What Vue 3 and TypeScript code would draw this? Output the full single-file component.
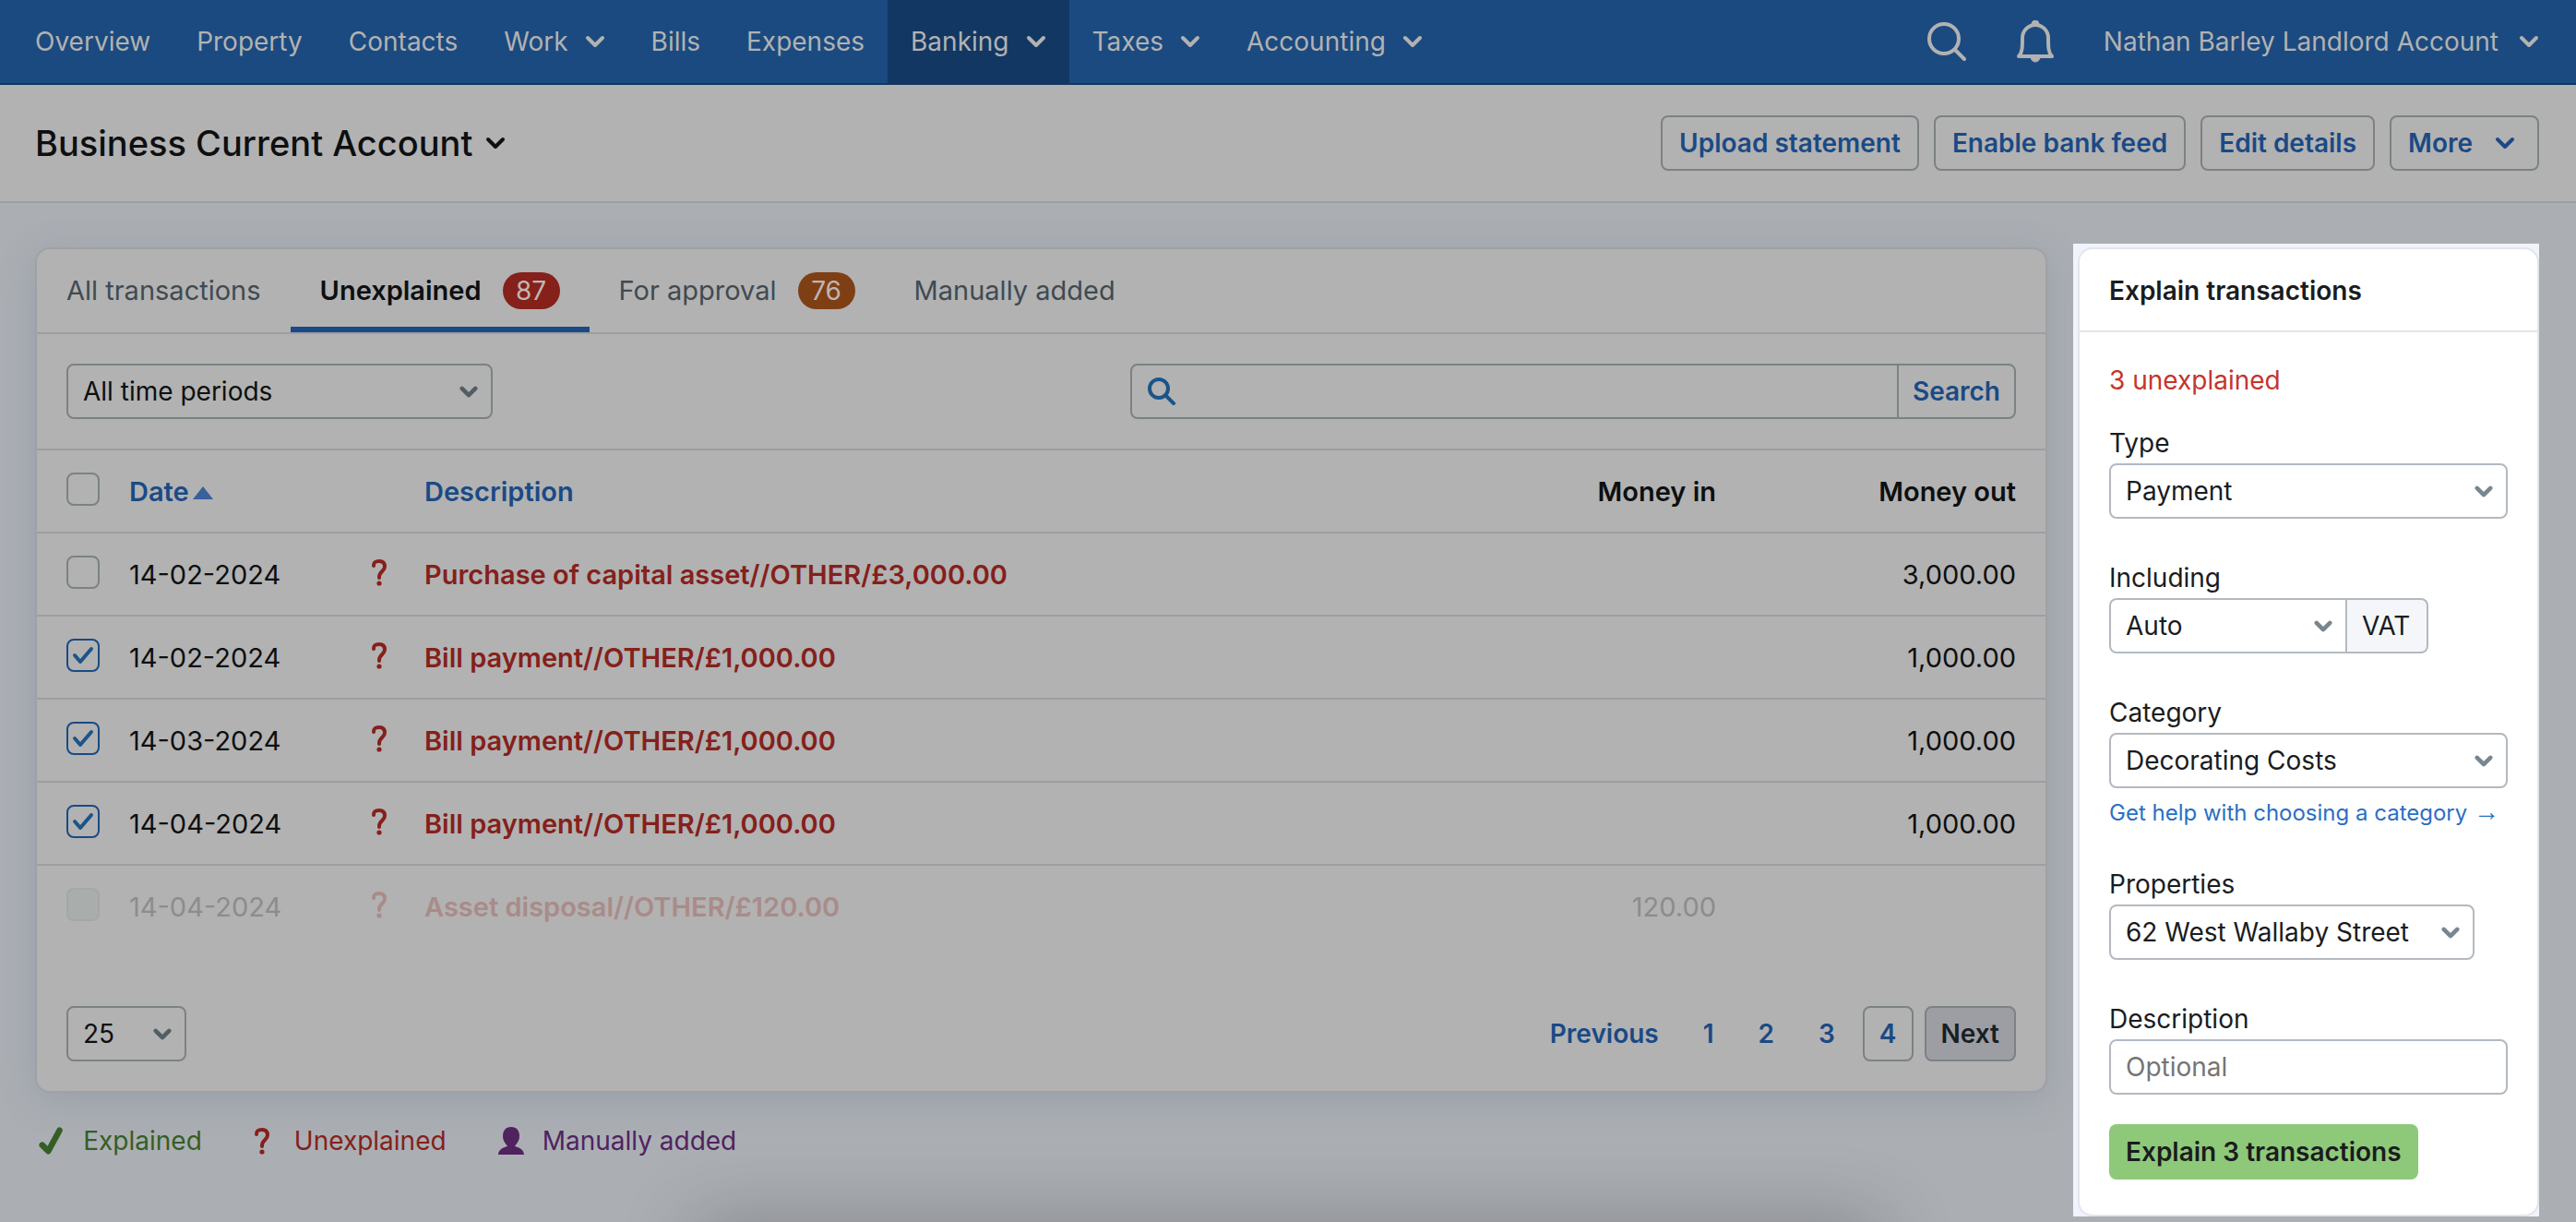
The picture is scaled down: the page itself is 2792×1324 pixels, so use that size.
<script setup lang="ts">
import { ref } from 'vue'

interface NavItem {
  label: string
  menu?: boolean
  active?: boolean
}

interface Tab {
  label: string
  count?: number
  tone?: 'red' | 'orange'
  active?: boolean
}

interface Transaction {
  id: number
  date: string
  description: string
  moneyIn: string
  moneyOut: string
  checked: boolean
  disabled?: boolean
}

const navItems: NavItem[] = [
  { label: 'Overview' },
  { label: 'Property' },
  { label: 'Contacts' },
  { label: 'Work', menu: true },
  { label: 'Bills' },
  { label: 'Expenses' },
  { label: 'Banking', menu: true, active: true },
  { label: 'Taxes', menu: true },
  { label: 'Accounting', menu: true },
]

const tabs: Tab[] = [
  { label: 'All transactions' },
  { label: 'Unexplained', count: 87, tone: 'red', active: true },
  { label: 'For approval', count: 76, tone: 'orange' },
  { label: 'Manually added' },
]

const transactions = ref<Transaction[]>([
  { id: 1, date: '14-02-2024', description: 'Purchase of capital asset//OTHER/£3,000.00', moneyIn: '', moneyOut: '3,000.00', checked: false },
  { id: 2, date: '14-02-2024', description: 'Bill payment//OTHER/£1,000.00', moneyIn: '', moneyOut: '1,000.00', checked: true },
  { id: 3, date: '14-03-2024', description: 'Bill payment//OTHER/£1,000.00', moneyIn: '', moneyOut: '1,000.00', checked: true },
  { id: 4, date: '14-04-2024', description: 'Bill payment//OTHER/£1,000.00', moneyIn: '', moneyOut: '1,000.00', checked: true },
  { id: 5, date: '14-04-2024', description: 'Asset disposal//OTHER/£120.00', moneyIn: '120.00', moneyOut: '', checked: false, disabled: true },
])

const pages = [1, 2, 3, 4]
const currentPage = 4
</script>

<template>
  <div class="page">
    <header class="topbar">
      <nav class="nav" aria-label="Main">
        <a v-for="item in navItems" :key="item.label" href="#" class="nav-item" :class="{ active: item.active }">
          {{ item.label }}
          <svg v-if="item.menu" class="chevron" viewBox="0 0 22 14" aria-hidden="true"><path d="M3 3l8 8 8-8" /></svg>
        </a>
      </nav>
      <div class="tools">
        <button type="button" class="icon-button" aria-label="Search">
          <svg viewBox="0 0 44 46" aria-hidden="true">
            <circle cx="19" cy="20" r="16" /><path d="M31 32l10 10" />
          </svg>
        </button>
        <button type="button" class="icon-button" aria-label="Notifications">
          <svg viewBox="0 0 44 46" aria-hidden="true">
            <path d="M4 39C8 35 8 29 8 19a14 14 0 0 1 28 0c0 10 0 16 4 20z" />
            <path class="solid" d="M17 40h10a5 5 0 0 1-10 0zM18 4a4 4 0 0 1 8 0z" />
          </svg>
        </button>
        <a href="#" class="account">
          Nathan Barley Landlord Account
          <svg class="chevron" viewBox="0 0 22 14" aria-hidden="true"><path d="M3 3l8 8 8-8" /></svg>
        </a>
      </div>
    </header>

    <section class="heading">
      <h1>
        Business Current Account
        <svg class="chevron" viewBox="0 0 22 14" aria-hidden="true"><path d="M3 3l8 8 8-8" /></svg>
      </h1>
      <div class="actions">
        <button type="button" class="button">Upload statement</button>
        <button type="button" class="button">Enable bank feed</button>
        <button type="button" class="button">Edit details</button>
        <button type="button" class="button more">
          More
          <svg class="chevron" viewBox="0 0 22 14" aria-hidden="true"><path d="M3 3l8 8 8-8" /></svg>
        </button>
      </div>
    </section>

    <main class="content">
      <div class="primary">
        <section class="card">
          <nav class="tabs" aria-label="Transactions">
            <a v-for="tab in tabs" :key="tab.label" href="#" class="tab" :class="{ active: tab.active }">
              {{ tab.label }}
              <span v-if="tab.count" class="badge" :class="tab.tone">{{ tab.count }}</span>
            </a>
          </nav>

          <div class="filters">
            <span class="select period">
              <select aria-label="Time period"><option>All time periods</option></select>
              <svg class="caret" viewBox="0 0 22 14" aria-hidden="true"><path d="M3 3l8 8 8-8" /></svg>
            </span>
            <form class="search" role="search" @submit.prevent>
              <svg class="search-icon" viewBox="0 0 32 32" aria-hidden="true">
                <circle cx="13" cy="13" r="10" /><path d="M20 20l9 9" />
              </svg>
              <input type="search" aria-label="Search transactions" />
              <button type="submit">Search</button>
            </form>
          </div>

          <table>
            <colgroup>
              <col class="col-check" /><col class="col-date" /><col class="col-status" />
              <col /><col class="col-in" /><col class="col-out" />
            </colgroup>
            <thead>
              <tr>
                <th class="check-cell"><span class="check"><input type="checkbox" aria-label="Select all" /></span></th>
                <th>
                  <a href="#">Date<svg class="sort" viewBox="0 0 22 14" aria-hidden="true"><path d="M0 14L11 0l11 14z" /></svg></a>
                </th>
                <td></td>
                <th><a href="#">Description</a></th>
                <th class="amount">Money in</th>
                <th class="amount last">Money out</th>
              </tr>
            </thead>
            <tbody>
              <tr v-for="row in transactions" :key="row.id" :class="{ faded: row.disabled }">
                <td class="check-cell">
                  <span class="check">
                    <input v-model="row.checked" type="checkbox" :disabled="row.disabled" :aria-label="'Select ' + row.description" />
                    <svg v-if="row.checked" viewBox="0 0 36 36" aria-hidden="true"><path d="M9 18l6 7L27 11" /></svg>
                  </span>
                </td>
                <td>{{ row.date }}</td>
                <td class="status">
                  <svg viewBox="0 0 18 30" role="img" aria-label="Unexplained">
                    <path d="M3 8C3 4 5 3 9 3s6 2 6 6c0 5-6 5-6 11v1" /><circle cx="9" cy="27" r="2.6" />
                  </svg>
                </td>
                <td><a href="#" class="description">{{ row.description }}</a></td>
                <td class="amount">{{ row.moneyIn }}</td>
                <td class="amount last">{{ row.moneyOut }}</td>
              </tr>
            </tbody>
          </table>

          <div class="footer">
            <span class="select size">
              <select aria-label="Rows per page"><option>25</option></select>
              <svg class="caret" viewBox="0 0 22 14" aria-hidden="true"><path d="M3 3l8 8 8-8" /></svg>
            </span>
            <nav class="pager" aria-label="Pagination">
              <a href="#">Previous</a>
              <a v-for="page in pages" :key="page" href="#" :class="{ current: page === currentPage }">{{ page }}</a>
              <button type="button">Next</button>
            </nav>
          </div>
        </section>

        <ul class="legend">
          <li class="green">
            <svg viewBox="0 0 28 32" aria-hidden="true"><path d="M4 21l7 7L24 4" /></svg>Explained
          </li>
          <li class="red">
            <svg viewBox="0 0 18 30" aria-hidden="true">
              <path d="M3 8C3 4 5 3 9 3s6 2 6 6c0 5-6 5-6 11v1" /><circle cx="9" cy="27" r="2.6" />
            </svg>Unexplained
          </li>
          <li class="purple">
            <svg viewBox="0 0 28 30" aria-hidden="true">
              <path d="M14 0c6 0 9 4 9 10 0 5-3 8-5 11 5 1 10 4 10 9H0c0-5 5-8 10-9-2-3-5-6-5-11C5 4 8 0 14 0z" />
            </svg>Manually added
          </li>
        </ul>
      </div>

      <div class="spotlight">
        <aside class="panel">
          <h2>Explain transactions</h2>
          <form class="panel-body" @submit.prevent>
            <p class="summary">3 unexplained</p>
            <div class="field">
              <label for="type">Type</label>
              <span class="select">
                <select id="type"><option>Payment</option></select>
                <svg class="caret" viewBox="0 0 22 14" aria-hidden="true"><path d="M3 3l8 8 8-8" /></svg>
              </span>
            </div>
            <div class="field">
              <label for="vat">Including</label>
              <div class="vat">
                <span class="select">
                  <select id="vat"><option>Auto</option></select>
                  <svg class="caret" viewBox="0 0 22 14" aria-hidden="true"><path d="M3 3l8 8 8-8" /></svg>
                </span>
                <span class="suffix">VAT</span>
              </div>
            </div>
            <div class="field">
              <label for="category">Category</label>
              <span class="select">
                <select id="category"><option>Decorating Costs</option></select>
                <svg class="caret" viewBox="0 0 22 14" aria-hidden="true"><path d="M3 3l8 8 8-8" /></svg>
              </span>
              <a href="#" class="help">Get help with choosing a category <span class="arrow">→</span></a>
            </div>
            <div class="field">
              <label for="property">Properties</label>
              <span class="select property">
                <select id="property"><option>62 West Wallaby Street</option></select>
                <svg class="caret" viewBox="0 0 22 14" aria-hidden="true"><path d="M3 3l8 8 8-8" /></svg>
              </span>
            </div>
            <div class="field">
              <label for="description">Description</label>
              <input id="description" type="text" placeholder="Optional" />
            </div>
            <button type="submit" class="submit">Explain 3 transactions</button>
          </form>
        </aside>
      </div>
    </main>
    <div class="tray-shadow"></div>
  </div>
</template>

<style>
body {
  margin: 0;
}
</style>

<style scoped>
.page {
  --surface: #b2b2b2;
  --ink: #0d0f10;
  --link: #1a4a85;
  --line: #9d9da3;
  --edge: #7b8285;
  --red: #85201b;
  --caret: #525d64;
  position: relative;
  min-height: 100vh;
  overflow: hidden;
  background: #abafb4;
  color: var(--ink);
  font-family: Inter, "Liberation Sans", sans-serif;
  font-size: 28px;
  line-height: 40px;
}

.page *,
.page *::before {
  box-sizing: border-box;
}

a {
  color: inherit;
  text-decoration: none;
}

button,
input,
select {
  margin: 0;
  font: inherit;
  color: inherit;
}

.chevron {
  flex: none;
  width: 22px;
  height: 14px;
  fill: none;
  stroke: currentColor;
  stroke-width: 4;
  stroke-linecap: round;
  stroke-linejoin: round;
}

.topbar {
  display: flex;
  justify-content: space-between;
  height: 92px;
  padding: 0 40px 0 13px;
  border-bottom: 2px solid #13375f;
  background: #1b4a80;
  color: var(--surface);
}

.nav,
.tools,
.nav-item,
.account {
  display: flex;
  align-items: center;
}

.nav {
  align-items: stretch;
}

.nav-item {
  gap: 18px;
  padding: 0 25px;
}

.nav-item.active {
  background: #133763;
}

.icon-button {
  display: flex;
  padding: 0;
  border: 0;
  background: none;
}

.icon-button svg {
  width: 44px;
  height: 46px;
  fill: none;
  stroke: currentColor;
  stroke-width: 4;
  stroke-linecap: round;
  stroke-linejoin: round;
}

.icon-button .solid {
  fill: currentColor;
  stroke-width: 1;
}

.tools {
  gap: 52px;
}

.account {
  gap: 22px;
}

.heading {
  display: flex;
  align-items: center;
  justify-content: space-between;
  height: 128px;
  padding: 0 40px 0 38px;
  border-bottom: 2px solid #9d9fa3;
  background: var(--surface);
}

h1 {
  display: flex;
  align-items: center;
  gap: 14px;
  margin: 0;
  font-size: 38px;
  font-weight: 500;
  line-height: 48px;
}

.actions {
  display: flex;
  gap: 16px;
}

.button {
  height: 60px;
  padding: 0 18px;
  border: 2px solid var(--edge);
  border-radius: 8px;
  background: none;
  color: var(--link);
  font-weight: 600;
}

.more {
  display: flex;
  align-items: center;
  gap: 24px;
  padding-right: 24px;
}

.content {
  display: flex;
  align-items: flex-start;
  padding: 44px 40px 0 38px;
}

.primary {
  flex: 1;
  min-width: 0;
  padding-top: 4px;
}

.card {
  border: 2px solid #9fa1a6;
  border-radius: 16px;
  background: var(--surface);
  box-shadow: 0 8px 40px rgba(90, 100, 125, 0.22);
}

.tabs {
  display: flex;
  height: 92px;
  border-bottom: 2px solid var(--line);
  font-size: 29px;
}

.tab {
  display: flex;
  align-items: center;
  gap: 23px;
  padding: 6px 32px 0;
  border-bottom: 6px solid transparent;
  color: #414a50;
}

.tab.active {
  border-bottom-color: #1a4a85;
  color: var(--ink);
  font-weight: 600;
}

.badge {
  width: 62px;
  border-radius: 20px;
  color: #c0b5b3;
  font-size: 28px;
  font-weight: 400;
  text-align: center;
}

.badge.red {
  background: #85201b;
}

.badge.orange {
  background: #7f3f15;
}

.filters {
  display: flex;
  align-items: center;
  justify-content: space-between;
  gap: 32px;
  height: 126px;
  padding: 0 32px;
  border-bottom: 2px solid var(--line);
}

.select {
  position: relative;
  display: block;
}

.select select {
  display: block;
  width: 100%;
  height: 60px;
  padding: 0 48px 0 16px;
  border: 2px solid var(--edge);
  border-radius: 8px;
  appearance: none;
  background: none;
}

.caret {
  position: absolute;
  top: 24px;
  right: 16px;
  width: 20px;
  height: 13px;
  fill: none;
  stroke: var(--caret);
  stroke-width: 5;
  stroke-linecap: round;
  stroke-linejoin: round;
  pointer-events: none;
}

.period {
  width: 462px;
}

.size {
  width: 130px;
}

.search {
  display: flex;
  align-items: center;
  width: 960px;
  height: 60px;
  border: 2px solid var(--edge);
  border-radius: 8px;
}

.search-icon {
  flex: none;
  width: 32px;
  height: 32px;
  margin: 0 16px;
  fill: none;
  stroke: #1b5588;
  stroke-width: 4;
  stroke-linecap: round;
}

.search input {
  flex: 1;
  min-width: 0;
  height: 56px;
  padding: 0;
  border: 0;
  appearance: none;
  background: none;
}

.search button {
  height: 56px;
  padding: 0 15px;
  border: 0;
  border-left: 2px solid var(--edge);
  background: none;
  color: var(--link);
  font-weight: 600;
}

table {
  width: 100%;
  border-collapse: separate;
  border-spacing: 0;
  table-layout: fixed;
  font-size: 29px;
}

.col-check {
  width: 100px;
}

.col-date {
  width: 262px;
}

.col-status {
  width: 58px;
}

.col-in {
  width: 300px;
}

.col-out {
  width: 357px;
}

th,
td {
  height: 90px;
  padding: 2px 0 0;
  border-bottom: 2px solid var(--line);
  text-align: left;
  white-space: nowrap;
}

th {
  font-weight: 600;
}

th a {
  color: var(--link);
}

tbody tr:last-child td {
  border-bottom-color: transparent;
}

.check-cell {
  padding: 0 0 4px 32px;
}

.check {
  position: relative;
  display: block;
  width: 36px;
  height: 36px;
}

.check input {
  display: block;
  width: 36px;
  height: 36px;
  border: 2px solid var(--edge);
  border-radius: 8px;
  appearance: none;
}

.check input:checked {
  border-color: var(--link);
}

.check input:disabled {
  border-color: #a4a7a6;
  background: #a9adab;
}

.check svg {
  position: absolute;
  inset: 0;
  fill: none;
  stroke: #1b5588;
  stroke-width: 4;
  stroke-linecap: round;
  stroke-linejoin: round;
  pointer-events: none;
}

.sort {
  width: 22px;
  height: 14px;
  margin-left: 4px;
  vertical-align: 2px;
  fill: #38609a;
}

.status svg {
  display: block;
  width: 18px;
  height: 30px;
  margin-bottom: 6px;
}

.status path,
.red path {
  fill: none;
  stroke: var(--red);
  stroke-width: 4;
  stroke-linecap: round;
}

.status circle,
.red circle {
  fill: var(--red);
}

.description {
  color: var(--red);
  font-weight: 600;
}

.amount {
  text-align: right;
}

.last {
  padding-right: 32px;
}

.faded {
  --red: #a98b89;
  color: #8c8c8c;
}

.footer {
  display: flex;
  justify-content: space-between;
  padding: 62px 32px 32px;
}

.pager {
  display: flex;
  gap: 12px;
}

.pager a,
.pager button {
  height: 60px;
  padding: 0 16px;
  border: 2px solid transparent;
  border-radius: 8px;
  color: var(--link);
  font-weight: 600;
  line-height: 56px;
}

.pager .current {
  border-color: var(--edge);
}

.pager button {
  border-color: var(--edge);
  background: #9d9ea3;
  color: #181f24;
}

.legend {
  display: flex;
  gap: 56px;
  margin: 0;
  padding: 32px 4px;
  list-style: none;
}

.legend li {
  display: flex;
  align-items: center;
  gap: 20px;
}

.legend svg {
  height: 30px;
}

.green {
  color: #355e24;
}

.legend .green {
  gap: 22px;
}

.green path {
  fill: none;
  stroke: currentColor;
  stroke-width: 7;
  stroke-linecap: round;
  stroke-linejoin: round;
}

.legend .red {
  gap: 26px;
  color: var(--red);
}

.purple {
  color: #50235f;
}

.purple path {
  fill: currentColor;
}

.spotlight {
  --edge: #b3b9bf;
  --caret: #78868f;
  --ink: #1a1c1e;
  flex: none;
  width: 505px;
  margin-left: 28px;
  padding: 4px 0 0 5px;
  background: #eff4fd;
  color: var(--ink);
}

.panel {
  border: 2px solid #e3e5eb;
  border-radius: 16px;
  background: #fff;
}

h2 {
  margin: 0;
  padding: 25px 32px 23px;
  border-bottom: 2px solid #e3e5eb;
  font-size: 28px;
  font-weight: 600;
  line-height: 40px;
}

.panel-body {
  padding: 32px 32px 38px;
}

.summary {
  margin: 0 0 28px;
  color: #c5352c;
}

.field {
  margin-bottom: 44px;
}

.field label {
  display: block;
  height: 42px;
}

.vat {
  display: flex;
}

.vat .select {
  width: 258px;
}

.vat select {
  border-radius: 8px 0 0 8px;
}

.suffix {
  padding: 8px 18px 8px 16px;
  border: 2px solid var(--edge);
  border-left: 0;
  border-radius: 0 8px 8px 0;
  background: #f5f6f9;
}

.help {
  display: block;
  padding-top: 14px;
  color: #2a6fc4;
  font-size: 24px;
  line-height: 26px;
  white-space: nowrap;
}

.arrow {
  font-family: "Liberation Sans", sans-serif;
  font-size: 28px;
  line-height: 24px;
}

.property {
  width: 396px;
}

.field input {
  display: block;
  width: 100%;
  height: 60px;
  padding: 0 16px;
  border: 2px solid var(--edge);
  border-radius: 8px;
  background: none;
}

.field input::placeholder {
  color: #757575;
  opacity: 1;
}

.field:last-of-type {
  margin-bottom: 32px;
}

.submit {
  height: 60px;
  padding: 0 18px;
  border: 0;
  border-radius: 8px;
  background: #8ec97a;
  font-weight: 600;
}

.tray-shadow {
  position: absolute;
  top: 100%;
  left: 27%;
  width: 46%;
  height: 80px;
  box-shadow: 0 0 80px rgba(20, 15, 20, 0.26);
}
</style>
